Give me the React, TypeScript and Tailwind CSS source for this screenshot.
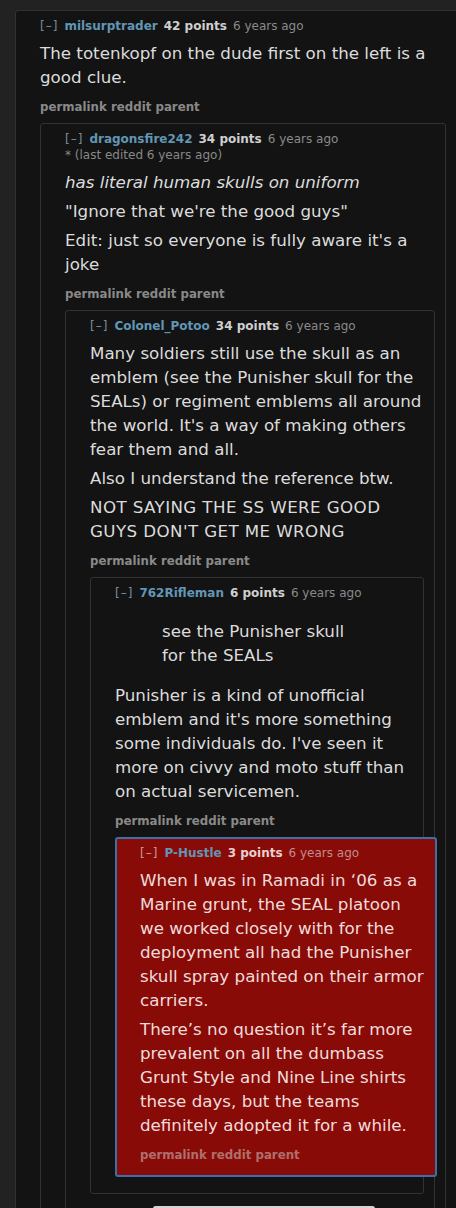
import type { ReactNode } from "react";

type CommentProps = {
  user: string;
  points: string;
  edited?: boolean;
  red?: boolean;
  children?: ReactNode;
  reply?: ReactNode;
  className?: string;
};

function Comment({ user, points, edited, red, children, reply, className = "" }: CommentProps) {
  const box = red
    ? "rounded-[3px] border-2 border-[#3d6fa8] bg-[#880b07] pl-[23px] pt-[6px] pb-[12px]"
    : "rounded-[3px] border border-[#323232] bg-[#131313] pl-[24px] pt-[7px] pb-[13px]";

  return (
    <div className={`${box} ${className}`}>
      <div className="flex items-baseline gap-[6px] text-[12px] leading-[16px] whitespace-nowrap">
        <span className={`tracking-[1px] ${red ? "text-[#c79a9a]" : "text-[#7c8e9c]"}`}>[–]</span>
        <span className="font-bold text-[#6196b5]">{user}</span>
        <span className={red ? "font-bold text-[#e6d0d0]" : "font-bold text-[#cfcfcf]"}>{points}</span>
        <span className={red ? "text-[#c08d8d]" : "text-[#8a8a8a]"}>6 years ago</span>
      </div>
      {edited && (
        <div className="text-[12px] leading-[16px] text-[#888]">* (last edited 6 years ago)</div>
      )}
      <div
        className={`mt-[7px] flex flex-col text-[16.7px] leading-[24px] ${
          red ? "pr-[8px] text-[#f0dcdc]" : "pr-[5px] text-[#dcdcdc]"
        }`}
      >
        {children}
      </div>
      <div
        className={`mt-[5px] text-[11.8px] leading-[16px] font-bold ${
          red ? "text-[#b06f6c]" : "text-[#898989]"
        }`}
      >
        permalink reddit parent
      </div>
      {reply && <div className="mt-[8px] mb-[3px]">{reply}</div>}
    </div>
  );
}

function P({ children, className = "" }: { children: ReactNode; className?: string }) {
  return <p className={`mb-[5px] ${className}`}>{children}</p>;
}

export default function App() {
  return (
    <div
      className="relative h-[1208px] overflow-hidden bg-[#222] pl-[15px] pt-[10px]"
      style={{ fontFamily: '"DejaVu Sans", Verdana, sans-serif' }}
    >
      <Comment
        user="milsurptrader"
        points="42 points"
        className="mr-[-1px] rounded-r-none"
        reply={
          <Comment
            user="dragonsfire242"
            points="34 points"
            edited
            className="mr-[10px]"
            reply={
              <Comment
                user="Colonel_Potoo"
                points="34 points"
                className="mr-[10px]"
                reply={
                  <Comment
                    user="762Rifleman"
                    points="6 points"
                    className="mr-[10px]"
                    reply={
                      <Comment user="P-Hustle" points="3 points" red className="mr-[-14px]">
                        <P>
                          When I was in Ramadi in ‘06 as a Marine grunt, the SEAL platoon we worked closely
                          with for the deployment all had the Punisher skull spray painted on their armor
                          carriers.
                        </P>
                        <P>
                          There’s no question it’s far more prevalent on all the dumbass Grunt Style and Nine
                          Line shirts these days, but the teams definitely adopted it for a while.
                        </P>
                      </Comment>
                    }
                  >
                    <blockquote className="mt-[11px] mb-[16px] ml-[47px] w-[198px]">
                      see the Punisher skull for the SEALs
                    </blockquote>
                    <P>
                      Punisher is a kind of unofficial emblem and it's more something some individuals do.
                      I've seen it more on civvy and moto stuff than on actual servicemen.
                    </P>
                  </Comment>
                }
              >
                <P>
                  Many soldiers still use the skull as an emblem (see the Punisher skull for the SEALs) or
                  regiment emblems all around the world. It's a way of making others fear them and all.
                </P>
                <P>Also I understand the reference btw.</P>
                <P className="tracking-[0.4px]">NOT SAYING THE SS WERE GOOD GUYS DON'T GET ME WRONG</P>
              </Comment>
            }
          >
            <P>
              <em>has literal human skulls on uniform</em>
            </P>
            <P>"Ignore that we're the good guys"</P>
            <P>Edit: just so everyone is fully aware it's a joke</P>
          </Comment>
        }
      >
        <P>The totenkopf on the dude first on the left is a good clue.</P>
      </Comment>

      <div className="absolute bottom-[-3px] left-[153px] h-[5px] w-[222px] rounded-full bg-[#d4d4d4]" />
    </div>
  );
}
